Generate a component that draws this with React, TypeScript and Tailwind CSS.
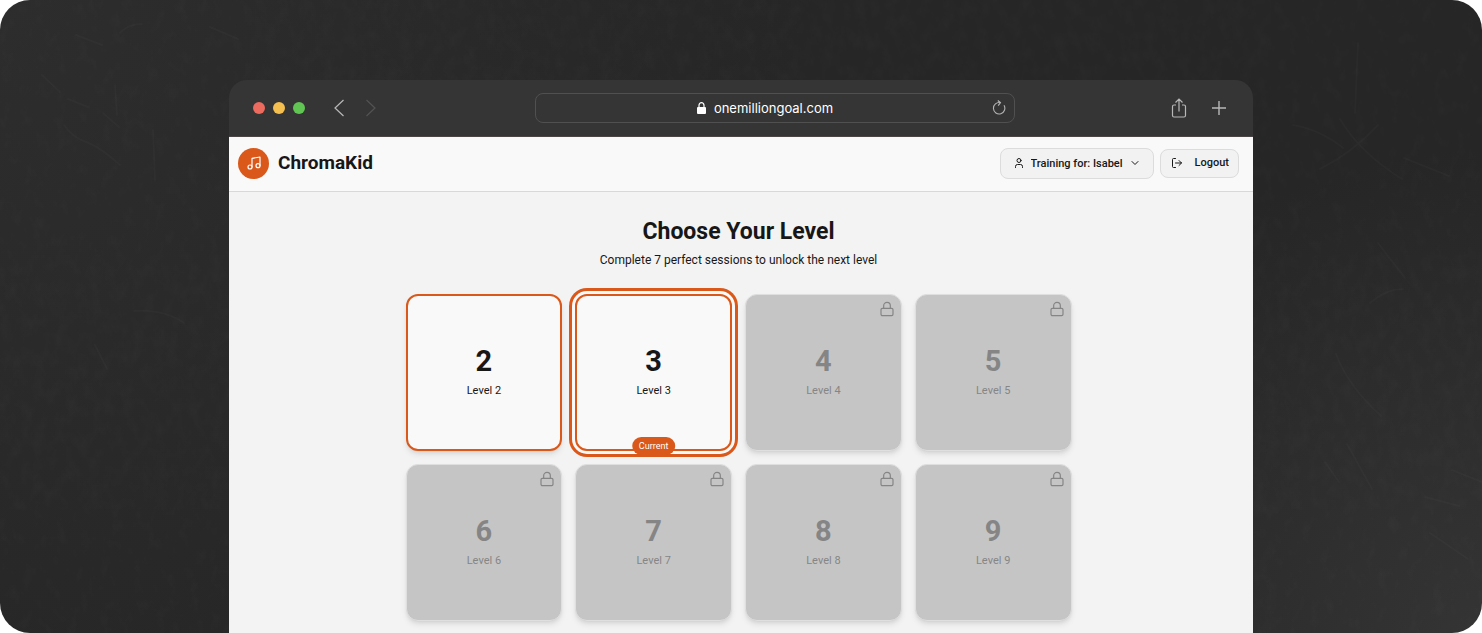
import { ChevronDown, Lock, LogOut, Music, User } from "lucide-react";

const levels = [2, 3, 4, 5, 6, 7, 8, 9];
const currentLevel = 3;

// dark slate surface behind the browser window
function Backdrop() {
  return (
    <svg className="absolute inset-0 w-full h-full" preserveAspectRatio="xMidYMid slice" viewBox="0 0 1482 633" aria-hidden="true">
      <filter id="grain" x="0" y="0" width="100%" height="100%">
        <feTurbulence type="fractalNoise" baseFrequency="0.09 0.06" numOctaves="4" seed="7" />
        <feColorMatrix values="0 0 0 0 1  0 0 0 0 1  0 0 0 0 1  0.22 0 0 0 -0.08" />
      </filter>
      <rect width="1482" height="633" filter="url(#grain)" opacity="0.15" />
      <g fill="none" stroke="#fff" strokeOpacity="0.018" strokeWidth="2" strokeLinecap="round">
        <path d="M68 99 88 107M64 125q8 12 22 17t34 23M115 85l2 30M76 35l26 10M103 113l16 14M42 75l18 17" />
        <path d="M210 27l28 12M153 130l2 50M120 33q8-9 22-9M134 311q30-2 50 12M95 345l12 24" />
        <path d="M1293 125q28 5 50 23M1320 169q32-16 58-44M1340 119q20 34 62 60M1358 43l-3 70M1404 158l45 18M1378 243l27 35M1370 303q16-14 33-14M1336 354q12 32 45 62" />
        <path d="M1347 444l25 45M1425 497l34 9M1452 470l30 12M1430 533l38 26M1325 462l14 20" />
      </g>
    </svg>
  );
}

function TitleBar() {
  return (
    <div className="flex items-center h-[57px] rounded-t-[18px] bg-[#353535] border-b border-[#4a4646]">
      <div className="flex items-center w-[306px] pl-6">
        <div className="flex gap-2">
          <span className="size-3 rounded-full bg-[#ed6a5e]" />
          <span className="size-3 rounded-full bg-[#f5bf4f]" />
          <span className="size-3 rounded-full bg-[#61c554]" />
        </div>
        <div className="flex gap-5 ml-7">
          <button type="button" aria-label="Back" className="text-[#b8b8b8]">
            <svg width="12" height="18" viewBox="0 0 12 18" fill="none" stroke="currentColor" strokeWidth="1.2"><path d="M10.500 1 2 9l8.500 8" /></svg>
          </button>
          <button type="button" aria-label="Forward" className="text-[#535353]">
            <svg width="12" height="18" viewBox="0 0 12 18" fill="none" stroke="currentColor" strokeWidth="1.2"><path d="m1.500 1 8.500 8-8.500 8" /></svg>
          </button>
        </div>
      </div>
      <div className="flex-1 flex items-center h-[30px] px-2 rounded-lg border border-[#505050]">
        <label className="flex-1 flex items-center justify-center gap-2 pr-[6px]">
          <svg width="9" height="12" viewBox="0 0 9 12" aria-hidden="true">
            <rect y="5" width="9" height="7" rx="1" fill="#fff" />
            <path d="M2 5.500V3.200a2.500 2.500 0 0 1 5 0v2.300" fill="none" stroke="#fff" strokeWidth="1.2" />
          </svg>
          <input aria-label="Address" defaultValue="onemilliongoal.com" className="field-sizing-content pt-[2px] bg-transparent text-[13px] text-white outline-none font-[Inter,sans-serif]" />
        </label>
        <button type="button" aria-label="Reload" className="text-[#b4b4b4]">
          <svg width="14" height="16" viewBox="0 0 14 16" fill="none" stroke="currentColor" strokeWidth="1.1">
            <path d="M8.300 2.700A5.700 5.700 0 1 0 12 5.300" />
            <path d="M5.800.5 8.500 2.700 6.200 5.600" />
          </svg>
        </button>
      </div>
      <div className="flex items-center justify-end gap-[25px] w-[238px] pr-[27px] text-[#b8b8b8]">
        <button type="button" aria-label="Share">
          <svg width="16" height="20" viewBox="0 0 16 20" fill="none" stroke="currentColor" strokeWidth="1.2">
            <path d="M5 7H3a1.500 1.500 0 0 0-1.500 1.500v9A1.500 1.500 0 0 0 3 19h10a1.500 1.500 0 0 0 1.500-1.500v-9A1.500 1.500 0 0 0 13 7h-2M8 13.500V1.200M4.500 4.500 8 1l3.500 3.500" />
          </svg>
        </button>
        <button type="button" aria-label="New tab">
          <svg width="14" height="14" viewBox="0 0 14 14" fill="none" stroke="currentColor" strokeWidth="1.4"><path d="M7 0v14M0 7h14" /></svg>
        </button>
      </div>
    </div>
  );
}

function Header() {
  return (
    <header className="flex items-center justify-between h-[55px] pb-[2px] pl-[9px] pr-[14px] bg-[#f9f9f9] border-b border-[#d8d8d8]">
      <div className="flex items-center gap-[9px]">
        <span className="flex items-center justify-center size-[31px] rounded-full bg-[#d9581a] text-white">
          <Music size={16} strokeWidth={1.8} />
        </span>
        <span className="text-[19px] font-bold">ChromaKid</span>
      </div>
      <div className="flex items-center gap-[6px] text-[11px] font-medium">
        <label className="flex items-center h-[31px] px-3 rounded-lg border border-[#dcdcdc] bg-[#f2f2f2]">
          <User size={12} strokeWidth={2} />
          <select aria-label="Child in training" className="appearance-none bg-transparent pt-[2px] mx-[6px] outline-none">
            <option>Training for: Isabel</option>
          </select>
          <ChevronDown size={12} strokeWidth={2} />
        </label>
        <button type="button" className="flex items-center gap-3 h-[29px] pl-[10px] pr-[9px] rounded-lg border border-[#dcdcdc] bg-[#f2f2f2]">
          <LogOut size={12} strokeWidth={2} />
          <span className="pt-px">Logout</span>
        </button>
      </div>
    </header>
  );
}

function LevelCard({ level }: { level: number }) {
  const locked = level > currentLevel;
  const current = level === currentLevel;

  if (locked) {
    return (
      <button type="button" disabled className="relative flex flex-col items-center justify-center aspect-square pt-[2px] rounded-xl border border-[#dfdfdf] bg-[#c5c5c5] text-[#858585] shadow-md">
        <Lock size={16} strokeWidth={1.8} className="absolute top-[6px] right-[6px]" />
        <span className="text-[29px] leading-9 font-bold">{level}</span>
        <span className="text-[11px] leading-6">Level {level}</span>
      </button>
    );
  }

  return (
    <button
      type="button"
      className={
        current
          ? "relative flex flex-col items-center justify-center aspect-square pt-[2px] rounded-xl border-2 border-[#d9581a] bg-[#f9f9f9] shadow-md ring-[3px] ring-[#d9581a] ring-offset-[3px] ring-offset-[#f9f9f9]"
          : "relative flex flex-col items-center justify-center aspect-square pt-[2px] rounded-xl border-2 border-[#d9581a] bg-[#f9f9f9] shadow-md"
      }
    >
      <span className="text-[29px] leading-9 font-bold">{level}</span>
      <span className="text-[11px] leading-6">Level {level}</span>
      {current && (
        <span className="absolute -bottom-[6px] left-1/2 -translate-x-1/2 px-[7px] rounded-full bg-[#d9581a] text-white text-[9px] leading-[18px]">Current</span>
      )}
    </button>
  );
}

export default function App() {
  return (
    <div className="relative flex flex-col min-h-screen px-[229px] pt-20 rounded-[30px] overflow-hidden bg-[#262626] bg-[radial-gradient(circle_at_0%_0%,#2d2d2d,transparent_50%),radial-gradient(circle_at_100%_100%,#343434,transparent_30%)] font-[Roboto,sans-serif] text-[#171717]">
      <Backdrop />
      <div className="relative flex-1 flex flex-col">
        <TitleBar />
        <div className="flex-1 flex flex-col bg-[#f3f3f3]">
          <Header />
          <main className="flex flex-col items-center pt-6 pb-3 pr-[5px]">
            <h1 className="text-[23px] leading-8 font-bold">Choose Your Level</h1>
            <p className="mt-[2px] text-[12px] leading-5">Complete 7 perfect sessions to unlock the next level</p>
            <div className="grid grid-cols-4 gap-[13px] w-full max-w-[666px] mt-6">
              {levels.map((level) => (
                <LevelCard key={level} level={level} />
              ))}
            </div>
          </main>
        </div>
      </div>
    </div>
  );
}
